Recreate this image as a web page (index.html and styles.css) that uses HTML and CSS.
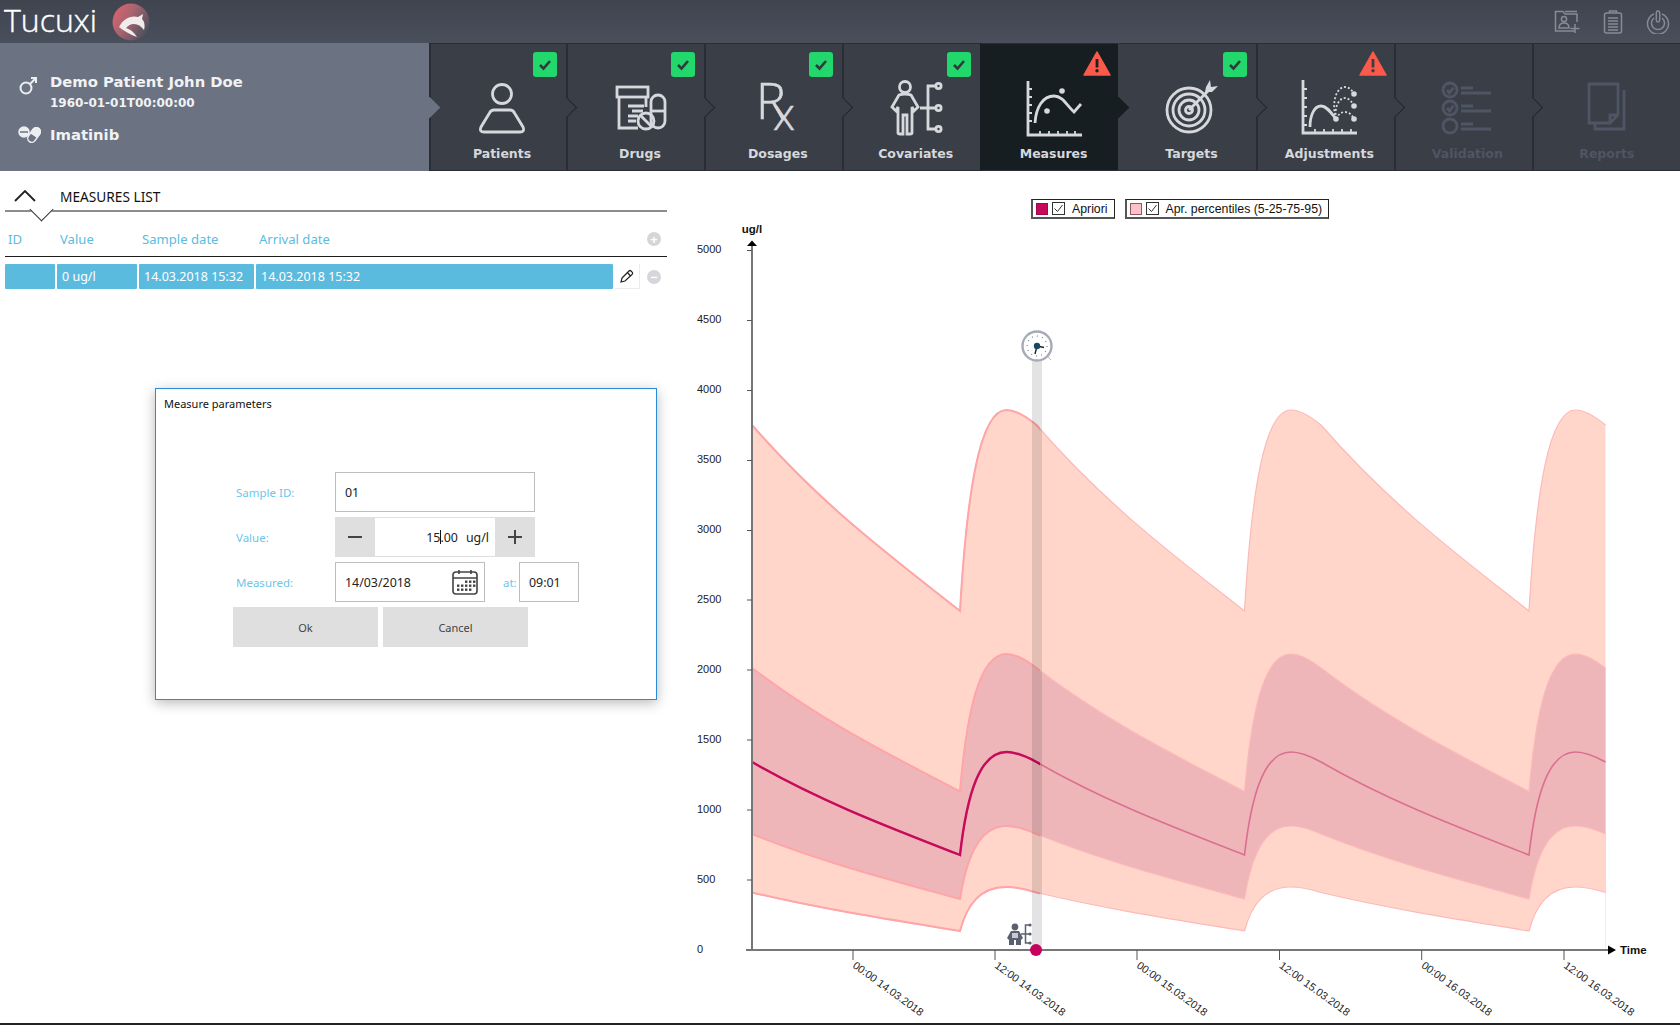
FILE: index.html
```html
<!DOCTYPE html>
<html lang="en">
<head>
  <meta charset="UTF-8">
  <title>Tucuxi</title>
  <link rel="stylesheet" href="styles.css">
</head>
<body>

  <header class="topbar">
    <div class="brand">
      <span class="brand-name">Tucuxi</span>
      <svg class="brand-logo" width="38" height="38" viewBox="0 0 38 38">
        <defs>
          <linearGradient id="logoFill" x1="0" y1="0" x2="1" y2="0.6">
            <stop offset="0" stop-color="#e8626e"/>
            <stop offset="0.5" stop-color="#a8646f"/>
            <stop offset="1" stop-color="#50525e"/>
          </linearGradient>
        </defs>
        <circle cx="19" cy="19" r="18.5" fill="url(#logoFill)"/>
        <path d="M7,24 C11,16 19,12 26,14 L31,11 L30,16 C33,19 33,24 32,27 C29,23 26,21 22,21 C18,21 16,23 14,25 C18,26 22,29 25,34 C19,32 12,28 7,24 Z" fill="#f1ecec"/>
      </svg>
    </div>
    <div class="top-actions">
      <svg width="26" height="24" viewBox="0 0 26 24">
        <path d="M21,21 H1.5 V1.5 H9 L11,4 H23 V12 M11,1.5 H23"/>
        <circle cx="10" cy="9" r="2.6"/>
        <path d="M5,18 Q5,13 10,13 Q15,13 15,18 Z"/>
        <path d="M21,14 V23 M16.5,18.5 H25.5"/>
      </svg>
      <svg width="20" height="24" viewBox="0 0 20 24">
        <rect x="1.5" y="3" width="17" height="20" rx="2"/>
        <path d="M6.5,3 V1 H13.5 V3 M5,8 H15 M5,11 H15 M5,14 H15 M5,17 H15 M5,20 H15"/>
      </svg>
      <svg width="24" height="24" viewBox="0 0 24 24">
        <path d="M8,4 A10.5,10.5 0 1 0 16,4 M8,8 A6.5,6.5 0 1 0 16,8"/>
        <rect x="10.3" y="1" width="3.4" height="11" rx="1.7"/>
      </svg>
    </div>
  </header>

  <nav class="flow">
    <section class="patient">
      <div class="patient-line">
        <svg class="patient-icon" width="20" height="20" viewBox="0 0 20 20">
          <circle cx="8" cy="12" r="5.5"/>
          <path d="M12,8 L18,2 M13,2 H18 V7"/>
        </svg>
        <div>
          <div class="patient-name">Demo Patient John Doe</div>
          <div class="patient-birth">1960-01-01T00:00:00</div>
        </div>
      </div>
      <div class="patient-line patient-drug">
        <svg class="patient-icon patient-icon--pills" width="24" height="18" viewBox="0 0 24 18">
          <circle cx="6" cy="6" r="5" fill="#eceef0"/>
          <path d="M2,6 H10" stroke="#6b7383"/>
          <g transform="rotate(35 16 9)">
            <rect x="12" y="1" width="8" height="16" rx="4"/>
            <path d="M16,1 a4,4 0 0 1 4,4 v4 h-8 v-4 a4,4 0 0 1 4,-4 z" fill="#eceef0"/>
          </g>
        </svg>
        <div class="patient-name">Imatinib</div>
      </div>
    </section>

    <div class="tab tab--first">
      <span class="badge"><svg width="24" height="25" viewBox="0 0 24 25"><rect width="24" height="25" rx="3" fill="#22d76c"/><path d="M7,13 L10.5,16.5 L17,9" fill="none" stroke="#2f3a3c" stroke-width="2.6"/></svg></span>
      <svg class="tab-icon" viewBox="0 0 60 60">
        <circle cx="30" cy="17" r="9.5"/>
        <path d="M22,33 H38 Q41,33 42.5,36 L51,50 Q53,55 48,55 H12 Q7,55 9,50 L17.5,36 Q19,33 22,33 Z"/>
      </svg>
      <span class="tab-label">Patients</span>
    </div>

    <div class="tab">
      <span class="badge"><svg width="24" height="25" viewBox="0 0 24 25"><rect width="24" height="25" rx="3" fill="#22d76c"/><path d="M7,13 L10.5,16.5 L17,9" fill="none" stroke="#2f3a3c" stroke-width="2.6"/></svg></span>
      <svg class="tab-icon" viewBox="0 0 60 60">
        <rect x="7" y="10" width="31" height="10"/>
        <path d="M9,20 V51 H28 M36,20 V30 M18,29 H34 M22,34 H33 M18,39 H28 M18,44 H26"/>
        <rect x="41" y="18" width="14" height="33" rx="7"/>
        <path d="M41,34 H55"/>
        <circle cx="36" cy="44" r="8"/>
        <path d="M30.5,38.5 L41.5,49.5"/>
      </svg>
      <span class="tab-label">Drugs</span>
    </div>

    <div class="tab">
      <span class="badge"><svg width="24" height="25" viewBox="0 0 24 25"><rect width="24" height="25" rx="3" fill="#22d76c"/><path d="M7,13 L10.5,16.5 L17,9" fill="none" stroke="#2f3a3c" stroke-width="2.6"/></svg></span>
      <svg class="tab-icon tab-icon--rx" viewBox="0 0 60 60">
        <text x="8" y="42" class="rx-big">R</text>
        <text x="25" y="53" class="rx-small">x</text>
      </svg>
      <span class="tab-label">Dosages</span>
    </div>

    <div class="tab">
      <span class="badge"><svg width="24" height="25" viewBox="0 0 24 25"><rect width="24" height="25" rx="3" fill="#22d76c"/><path d="M7,13 L10.5,16.5 L17,9" fill="none" stroke="#2f3a3c" stroke-width="2.6"/></svg></span>
      <svg class="tab-icon" viewBox="0 0 60 60">
        <circle cx="19" cy="10" r="5.5"/>
        <path d="M13,18 Q19,16 25,18 L32,30 L28,34 L26,30 V56 Q26,57 24,57 H21 V38 H17 V57 H14 Q12,57 12,56 V30 L10,34 L6,30 Z"/>
        <path d="M50,9 H42 V52 H50 M34,31 H49"/>
        <circle cx="52.5" cy="9" r="2.6"/>
        <circle cx="52.5" cy="31" r="2.6"/>
        <circle cx="52.5" cy="52" r="2.6"/>
      </svg>
      <span class="tab-label">Covariates</span>
    </div>

    <div class="tab tab--active">
      <span class="badge badge--warn"><svg width="28" height="25" viewBox="0 0 28 25"><path d="M14,1 L27,24 H1 Z" fill="#fb5a4a" stroke="#fb5a4a" stroke-linejoin="round" stroke-width="1.5"/><rect x="12.6" y="8" width="2.8" height="8.5" fill="#1a2024"/><circle cx="14" cy="19.7" r="1.7" fill="#1a2024"/></svg></span>
      <svg class="tab-icon" viewBox="0 0 60 60">
        <path d="M4,4 V58 H58"/>
        <path class="thin" d="M4,12 H8 M4,20 H8 M4,28 H8 M4,36 H8 M4,44 H8 M16,58 V54 M25,58 V54 M34,58 V54 M43,58 V54 M51,58 V54"/>
        <path d="M11,46 C12,30 19,19 30,19 C39,19 43,29 50,35 L57,27"/>
        <circle class="dot" cx="38" cy="14" r="2.8"/>
        <circle class="dot" cx="23" cy="34" r="2.8"/>
      </svg>
      <span class="tab-label">Measures</span>
    </div>

    <div class="tab tab--after-active">
      <span class="badge"><svg width="24" height="25" viewBox="0 0 24 25"><rect width="24" height="25" rx="3" fill="#22d76c"/><path d="M7,13 L10.5,16.5 L17,9" fill="none" stroke="#2f3a3c" stroke-width="2.6"/></svg></span>
      <svg class="tab-icon" viewBox="0 0 60 60">
        <circle cx="28" cy="33" r="22"/>
        <circle cx="28" cy="33" r="16"/>
        <circle cx="28" cy="33" r="10"/>
        <circle cx="28" cy="33" r="3.5"/>
        <path d="M28,33 L49,12"/>
        <path d="M45,10 L49,3 L50,10 L57,9 L51,15 L44,15 Z" class="dot"/>
      </svg>
      <span class="tab-label">Targets</span>
    </div>

    <div class="tab">
      <span class="badge badge--warn"><svg width="28" height="25" viewBox="0 0 28 25"><path d="M14,1 L27,24 H1 Z" fill="#fb5a4a" stroke="#fb5a4a" stroke-linejoin="round" stroke-width="1.5"/><rect x="12.6" y="8" width="2.8" height="8.5" fill="#3a3e47"/><circle cx="14" cy="19.7" r="1.7" fill="#3a3e47"/></svg></span>
      <svg class="tab-icon" viewBox="0 0 60 60">
        <path d="M4,3 V56 H58"/>
        <path class="thin" d="M4,12 H8 M4,21 H8 M4,30 H8 M4,39 H8 M4,48 H8 M16,56 V52 M25,56 V52 M34,56 V52 M43,56 V52 M52,56 V52"/>
        <path d="M11,50 C11,37 16,29 22,29 C28,29 32,36 37,42"/>
        <path class="dashed" d="M37,42 C32,24 38,10 46,10 C50,10 53,13 55,17 M37,42 C35,30 40,21 46,21 C50,21 53,25 55,29 M37,42 C39,38 42,35 46,35 C50,35 53,38 55,42"/>
        <circle class="dot" cx="37" cy="42" r="2.8"/>
        <circle class="dot" cx="55" cy="17" r="2.8"/>
        <circle class="dot" cx="55" cy="29" r="2.8"/>
        <circle class="dot" cx="55" cy="42" r="2.8"/>
      </svg>
      <span class="tab-label">Adjustments</span>
    </div>

    <div class="tab tab--disabled">
      <svg class="tab-icon" viewBox="0 0 60 60">
        <circle cx="13" cy="13" r="7"/>
        <circle cx="13" cy="31" r="7"/>
        <circle cx="13" cy="49" r="7"/>
        <path d="M10,13 L12.5,16 L16.5,10.5 M10,31 L12.5,34 L16.5,28.5"/>
        <path d="M24,11 H36 M24,16 H54 M24,29 H36 M24,34 H54 M24,47 H36 M24,52 H54"/>
      </svg>
      <span class="tab-label">Validation</span>
    </div>

    <div class="tab tab--disabled tab--last">
      <svg class="tab-icon" viewBox="0 0 60 60">
        <path d="M12,7 H41 V38 L33,46 H12 Z M33,46 V38 H41"/>
        <path d="M47,13 V52 H18 V46"/>
      </svg>
      <span class="tab-label">Reports</span>
    </div>
  </nav>

  <main class="content">
    <section class="measures">
      <div class="list-title">
        <svg class="collapse" width="22" height="12" viewBox="0 0 22 12"><path d="M1,11 L11,1 L21,11"/></svg>
        <span>MEASURES LIST</span>
        <span class="title-notch"></span>
      </div>

      <div class="list-grid list-head">
        <span>ID</span>
        <span>Value</span>
        <span>Sample date</span>
        <span>Arrival date</span>
        <span></span>
        <span class="round-btn">+</span>
      </div>

      <div class="list-grid list-row">
        <span class="cell"></span>
        <span class="cell">0 ug/l</span>
        <span class="cell">14.03.2018 15:32</span>
        <span class="cell">14.03.2018 15:32</span>
        <span class="edit-btn">
          <svg width="14" height="14" viewBox="0 0 14 14"><path d="M2,9 L9,2 Q10,1 11,2 L12.5,3.5 Q13,4.5 12,5.5 L5,12 L1,13 Z M7.5,3.5 L10.5,7"/></svg>
        </span>
        <span class="round-btn">&minus;</span>
      </div>

      <div class="dialog">
        <div class="dialog-title">Measure parameters</div>
        <div class="dialog-form">
          <label>Sample ID:</label>
          <div class="field field--wide">01</div>

          <label>Value:</label>
          <div class="stepper">
            <span class="step"><svg width="14" height="14" viewBox="0 0 14 14"><path d="M0,7 H14"/></svg></span>
            <span class="step-value">15<i class="caret"></i>.00<span class="unit">ug/l</span></span>
            <span class="step"><svg width="14" height="14" viewBox="0 0 14 14"><path d="M0,7 H14 M7,0 V14"/></svg></span>
          </div>

          <label>Measured:</label>
          <div class="when">
            <div class="field field--date">
              14/03/2018
              <svg width="26" height="26" viewBox="0 0 26 26">
                <rect x="1" y="3" width="24" height="22" rx="3"/>
                <path d="M1,9 H25 M7,1 V5 M19,1 V5"/>
                <g class="cal-dots">
                  <rect x="13" y="11.5" width="2.4" height="2.4"/><rect x="17" y="11.5" width="2.4" height="2.4"/><rect x="21" y="11.5" width="2.4" height="2.4"/>
                  <rect x="5" y="15.5" width="2.4" height="2.4"/><rect x="9" y="15.5" width="2.4" height="2.4"/><rect x="13" y="15.5" width="2.4" height="2.4"/><rect x="17" y="15.5" width="2.4" height="2.4"/><rect x="21" y="15.5" width="2.4" height="2.4"/>
                  <rect x="5" y="19.5" width="2.4" height="2.4"/><rect x="9" y="19.5" width="2.4" height="2.4"/><rect x="13" y="19.5" width="2.4" height="2.4"/><rect x="17" y="19.5" width="2.4" height="2.4"/>
                </g>
              </svg>
            </div>
            <label class="at">at:</label>
            <div class="field field--time">09:01</div>
          </div>

          <div class="dialog-buttons">
            <button class="btn">Ok</button>
            <button class="btn">Cancel</button>
          </div>
        </div>
      </div>
    </section>

    <section class="chart-panel">
      <div class="legend">
        <div class="legend-item">
          <span class="swatch swatch--apriori"></span>
          <svg class="legend-check" width="13" height="13" viewBox="0 0 13 13"><rect x="0.5" y="0.5" width="12" height="12"/><path d="M2.5,6.5 L5.5,9.5 L10.5,3"/></svg>
          <span>Apriori</span>
        </div>
        <div class="legend-item">
          <span class="swatch swatch--pct"></span>
          <svg class="legend-check" width="13" height="13" viewBox="0 0 13 13"><rect x="0.5" y="0.5" width="12" height="12"/><path d="M2.5,6.5 L5.5,9.5 L10.5,3"/></svg>
          <span>Apr. percentiles (5-25-75-95)</span>
        </div>
      </div>

      <svg class="chart" width="1000" height="804" viewBox="680 219 1000 804">
        <defs>
          <path id="p95" d="M752,425 c71,81.8 142,133.9 208,186 c7,-120.6 20,-201 46.5,-201 c10,0 20,6.75 30,15 c71,81.8 142,133.9 208,186 c7,-120.6 20,-201 46.5,-201 c10,0 20,6.75 30,15 c71,81.8 142,133.9 208,186 c7,-120.6 20,-201 46.5,-201 c10,0 20,6.75 30,15"/>
          <path id="p75" d="M752,668 c71,54.3 142,88.9 208,123.5 c7,-82.5 20,-137.5 46.5,-137.5 c10,0 20,6.3 30,14 c71,54.3 142,88.9 208,123.5 c7,-82.5 20,-137.5 46.5,-137.5 c10,0 20,6.3 30,14 c71,54.3 142,88.9 208,123.5 c7,-82.5 20,-137.5 46.5,-137.5 c10,0 20,6.3 30,14"/>
          <path id="p50" d="M752,762 c71,40.9 142,67 208,93 c7,-61.8 20,-103 46.5,-103 c10,0 20,4.5 30,10 c71,40.9 142,67 208,93 c7,-61.8 20,-103 46.5,-103 c10,0 20,4.5 30,10 c71,40.9 142,67 208,93 c7,-61.8 20,-103 46.5,-103 c10,0 20,4.5 30,10"/>
          <path id="p25" d="M752,834 c71,28.6 142,46.8 208,65 c7,-43.8 20,-73 46.5,-73 c10,0 20,3.6 30,8 c71,28.6 142,46.8 208,65 c7,-43.8 20,-73 46.5,-73 c10,0 20,3.6 30,8 c71,28.6 142,46.8 208,65 c7,-43.8 20,-73 46.5,-73 c10,0 20,3.6 30,8"/>
          <path id="p5" d="M752,892.5 c71,16.9 142,27.7 208,38.5 c7,-26.4 20,-44 46.5,-44 c10,0 20,2.5 30,5.5 c71,16.9 142,27.7 208,38.5 c7,-26.4 20,-44 46.5,-44 c10,0 20,2.5 30,5.5 c71,16.9 142,27.7 208,38.5 c7,-26.4 20,-44 46.5,-44 c10,0 20,2.5 30,5.5"/>
          <clipPath id="past"><rect x="680" y="225" width="360" height="798"/></clipPath>
        </defs>

        <!-- bands painted top to bottom, each one closed down to the x axis -->
        <path class="band band--outer" d="M752,425 c71,81.8 142,133.9 208,186 c7,-120.6 20,-201 46.5,-201 c10,0 20,6.75 30,15 c71,81.8 142,133.9 208,186 c7,-120.6 20,-201 46.5,-201 c10,0 20,6.75 30,15 c71,81.8 142,133.9 208,186 c7,-120.6 20,-201 46.5,-201 c10,0 20,6.75 30,15 V950 H752 Z"/>
        <path class="band band--inner" d="M752,668 c71,54.3 142,88.9 208,123.5 c7,-82.5 20,-137.5 46.5,-137.5 c10,0 20,6.3 30,14 c71,54.3 142,88.9 208,123.5 c7,-82.5 20,-137.5 46.5,-137.5 c10,0 20,6.3 30,14 c71,54.3 142,88.9 208,123.5 c7,-82.5 20,-137.5 46.5,-137.5 c10,0 20,6.3 30,14 V950 H752 Z"/>
        <path class="band band--outer" d="M752,834 c71,28.6 142,46.8 208,65 c7,-43.8 20,-73 46.5,-73 c10,0 20,3.6 30,8 c71,28.6 142,46.8 208,65 c7,-43.8 20,-73 46.5,-73 c10,0 20,3.6 30,8 c71,28.6 142,46.8 208,65 c7,-43.8 20,-73 46.5,-73 c10,0 20,3.6 30,8 V950 H752 Z"/>
        <path class="band band--clear" d="M752,892.5 c71,16.9 142,27.7 208,38.5 c7,-26.4 20,-44 46.5,-44 c10,0 20,2.5 30,5.5 c71,16.9 142,27.7 208,38.5 c7,-26.4 20,-44 46.5,-44 c10,0 20,2.5 30,5.5 c71,16.9 142,27.7 208,38.5 c7,-26.4 20,-44 46.5,-44 c10,0 20,2.5 30,5.5 V950 H752 Z"/>

        <use href="#p95" class="pct-line"/>
        <use href="#p75" class="pct-line"/>
        <use href="#p25" class="pct-line"/>
        <use href="#p5" class="pct-line"/>
        <use href="#p95" class="pct-line pct-line--past" clip-path="url(#past)"/>
        <use href="#p75" class="pct-line pct-line--past" clip-path="url(#past)"/>
        <use href="#p25" class="pct-line pct-line--past" clip-path="url(#past)"/>
        <use href="#p5" class="pct-line pct-line--past" clip-path="url(#past)"/>
        <use href="#p50" class="median"/>
        <use href="#p50" class="median median--past" clip-path="url(#past)"/>

        <rect class="now-band" x="1032" y="358" width="10" height="592"/>

        <!-- axes -->
        <path class="axis" d="M752,246 V950 M746,950 H1610"/>
        <path class="tick" d="M747,250.5 H752 M747,320.5 H752 M747,390.5 H752 M747,460.5 H752 M747,530.5 H752 M747,600 H752 M747,670 H752 M747,740 H752 M747,810 H752 M747,880 H752"/>
        <path class="tick" d="M853,950 V960 M995,950 V960 M1137,950 V960 M1279.5,950 V960 M1421.7,950 V960 M1564,950 V960"/>
        <path class="arrow" d="M752,240.5 L757,246 H747 Z M1616,950 L1608,954.5 V945.5 Z"/>

        <g class="y-labels">
          <text x="697" y="253">5000</text>
          <text x="697" y="323">4500</text>
          <text x="697" y="393">4000</text>
          <text x="697" y="463">3500</text>
          <text x="697" y="533">3000</text>
          <text x="697" y="603">2500</text>
          <text x="697" y="673">2000</text>
          <text x="697" y="743">1500</text>
          <text x="697" y="813">1000</text>
          <text x="697" y="883">500</text>
          <text x="697" y="953">0</text>
        </g>
        <text class="axis-name" x="752" y="233" text-anchor="middle">ug/l</text>
        <text class="axis-name" x="1620" y="954">Time</text>

        <g class="x-labels">
          <text transform="translate(852,967) rotate(36)">00:00 14.03.2018</text>
          <text transform="translate(994,967) rotate(36)">12:00 14.03.2018</text>
          <text transform="translate(1136,967) rotate(36)">00:00 15.03.2018</text>
          <text transform="translate(1278.5,967) rotate(36)">12:00 15.03.2018</text>
          <text transform="translate(1420.7,967) rotate(36)">00:00 16.03.2018</text>
          <text transform="translate(1563,967) rotate(36)">12:00 16.03.2018</text>
        </g>

        <!-- clock marker over the band -->
        <g class="clock">
          <path class="clock-needle" d="M1027,335 L1051,360"/>
          <circle class="clock-face" cx="1037" cy="346" r="14.5"/>
          <circle class="clock-ticks" cx="1037" cy="346" r="10"/>
          <path class="clock-hand" d="M1037,346 L1044,347.5 M1037,346 L1035,354"/>
          <circle class="clock-hub" cx="1037" cy="346" r="3.2"/>
        </g>

        <!-- covariate change flag -->
        <g class="cov-flag">
          <circle cx="1015" cy="927" r="3.4"/>
          <path d="M1011,931 H1019 L1023,938 L1021,940 V945 H1016 V940 H1014 V945 H1009 V940 L1007,938 Z"/>
          <rect class="cov-shirt" x="1012" y="933" width="6" height="5"/>
          <path class="cov-tree" d="M1029,925 H1025.5 V943 H1029 M1021,934 H1029"/>
          <circle cx="1030" cy="925" r="1.6"/>
          <circle cx="1030" cy="934" r="1.6"/>
          <circle cx="1030" cy="943" r="1.6"/>
        </g>

        <circle class="now-dot" cx="1036" cy="950" r="6"/>
      </svg>
    </section>
  </main>

  <div class="bottom-line"></div>

</body>
</html>
```

FILE: styles.css
```css
* {
  box-sizing: border-box;
}

html, body {
  margin: 0;
  padding: 0;
}

body {
  width: 1680px;
  height: 1025px;
  overflow: hidden;
  background-color: #ffffff;
  font-family: "Noto Sans", sans-serif;
  display: flex;
  flex-direction: column;
}

/* top bar */

.topbar {
  height: 43px;
  flex: none;
  display: flex;
  justify-content: space-between;
  align-items: center;
  background: linear-gradient(#3f444f, #494f5b);
}

.brand {
  display: flex;
  align-items: center;
  padding-left: 4px;
}

.brand-name {
  font-family: "Open Sans", sans-serif;
  font-weight: 300;
  font-size: 32px;
  line-height: 38px;
  color: #ffffff;
  margin-top: -3px;
  -webkit-text-stroke: 0.4px #ffffff;
}

.brand-logo {
  margin-left: 15px;
}

.top-actions {
  display: flex;
  align-items: center;
  gap: 23px;
  padding-right: 10px;
}

.top-actions svg {
  fill: none;
  stroke: #868b95;
  stroke-width: 1.5;
}

/* patient + workflow tabs */

.flow {
  height: 128px;
  flex: none;
  display: flex;
}

.patient {
  width: 428.6px;
  flex: none;
  background-color: #6b7383;
  padding: 28px 0 0 18px;
  color: #f1f2f4;
  font-family: "DejaVu Sans", sans-serif;
  font-weight: bold;
}

.patient-line {
  display: flex;
  align-items: flex-start;
  gap: 12px;
}

.patient-drug {
  margin-top: 13px;
  align-items: center;
  gap: 8px;
}

.patient-icon {
  flex: none;
  margin-top: 5px;
  fill: none;
  stroke: #eceef0;
  stroke-width: 2;
}

.patient-icon--pills {
  margin-top: 0;
  margin-left: 0;
  stroke-width: 1.5;
}

.patient-name {
  font-size: 14.8px;
  line-height: 22px;
}

.patient-birth {
  font-size: 12px;
  line-height: 16px;
  margin-top: 2px;
}

.tab {
  position: relative;
  flex: 0 0 137.9px;
  padding: 34px 0 0 7px;
  display: flex;
  flex-direction: column;
  align-items: center;
  background-color: #3a3e47;
  border-left: 2px solid #2a2d34;
  border-top: 1px solid #2a2d34;
  border-bottom: 1px solid #2a2d34;
  color: #d6d8dc;
}

.tab::before {
  content: "";
  position: absolute;
  left: -9px;
  top: 56px;
  width: 14px;
  height: 14px;
  transform: rotate(45deg);
  background-color: #3a3e47;
  border-top: 1px solid #23262d;
  border-right: 1px solid #23262d;
}

.tab--first::before {
  background-color: #6b7383;
  border-color: #6b7383;
}

.tab--active {
  background-color: #171e21;
  border-left-color: #171e21;
}

.tab--active::before {
  display: none;
}

.tab--after-active {
  border-left-color: #3a3e47;
}

.tab--after-active::before {
  background-color: #171e21;
  border-color: #171e21;
}

.tab--disabled {
  color: #4e5564;
}

.tab--last {
  flex: 1;
  padding-left: 0;
}

.tab-icon {
  width: 60px;
  height: 60px;
  margin-top: -1px;
  overflow: visible;
  fill: none;
  stroke: currentColor;
  stroke-width: 2.8;
}

.tab-icon .dot {
  fill: currentColor;
  stroke: none;
}

.tab-icon .thin {
  stroke-width: 1.8;
}

.tab-icon .dashed {
  stroke-width: 1.8;
  stroke-dasharray: 2 2;
}

.tab-icon--rx {
  fill: currentColor;
  stroke: currentColor;
  stroke-width: 0.6;
  font-family: "Open Sans", sans-serif;
  font-weight: 300;
}

.rx-big {
  font-size: 50px;
}

.rx-small {
  font-size: 44px;
}

.tab-label {
  font-family: "DejaVu Sans", sans-serif;
  font-weight: bold;
  font-size: 12.5px;
  line-height: 18px;
  margin-top: 8px;
}

.badge {
  position: absolute;
  top: 8px;
  right: 9px;
  height: 25px;
  line-height: 0;
}

.badge--warn {
  top: 7px;
  right: 7px;
}

/* main content */

.content {
  flex: 1;
  display: flex;
}

.measures {
  position: relative;
  width: 680px;
  flex: none;
  padding: 0 13px 0 5px;
}

.list-title {
  position: relative;
  height: 41px;
  display: flex;
  align-items: center;
  padding: 11px 0 0 55px;
  border-bottom: 2px solid #8c8c8c;
  font-size: 13.7px;
  color: #111111;
}

.collapse {
  position: absolute;
  left: 9px;
  top: 19px;
  fill: none;
  stroke: #222222;
  stroke-width: 1.8;
}

.title-notch {
  position: absolute;
  left: 28px;
  bottom: -8px;
  width: 17px;
  height: 17px;
  transform: rotate(45deg);
  background-color: #ffffff;
  border-right: 1px solid #333333;
  border-bottom: 1px solid #333333;
}

.list-grid {
  display: grid;
  grid-template-columns: 50px 80px 115px 357px 27px 1fr;
  column-gap: 2px;
  align-items: center;
}

.list-head {
  height: 45px;
  padding-top: 9px;
  border-bottom: 1px solid #1c1c1c;
  color: #5bbce0;
  font-size: 13.1px;
}

.list-head span {
  padding-left: 3px;
}

.list-row {
  margin-top: 7px;
  height: 25px;
  font-size: 12.5px;
  color: #ffffff;
}

.cell {
  height: 25px;
  line-height: 25px;
  padding-left: 5px;
  background-color: #5bbbdf;
  border-radius: 1px;
}

.edit-btn {
  width: 25px;
  height: 25px;
  display: flex;
  align-items: center;
  justify-content: center;
  border-right: 1px solid #ececec;
  border-bottom: 1px solid #ececec;
}

.edit-btn svg {
  fill: none;
  stroke: #222222;
  stroke-width: 1.2;
}

.round-btn {
  width: 14px;
  height: 14px;
  justify-self: center;
  margin-left: -3px;
  padding: 0 !important;
  border-radius: 50%;
  background-color: #d5d6da;
  color: #ffffff;
  font-size: 13px;
  font-weight: bold;
  line-height: 14px;
  text-align: center;
}

/* dialog over the list */

.dialog {
  position: absolute;
  left: 155px;
  top: 217px;
  width: 502px;
  height: 312px;
  background-color: #ffffff;
  border: 1px solid #2a8cd8;
  box-shadow: 0 3px 12px rgba(0, 0, 0, 0.28);
}

.dialog-title {
  padding: 6px 0 0 8px;
  font-size: 11px;
  line-height: 18px;
  color: #111111;
}

.dialog-form {
  margin-top: 59px;
  padding-left: 80px;
  display: grid;
  grid-template-columns: 99px 1fr;
  grid-auto-rows: 40px;
  row-gap: 5px;
  align-items: center;
  font-size: 12.4px;
  color: #222222;
}

.dialog-form label {
  font-size: 11.5px;
  color: #6cc6ea;
}

.field {
  height: 40px;
  display: flex;
  align-items: center;
  padding-left: 9px;
  border: 1px solid #bdbdbd;
}

.field--wide {
  width: 200px;
}

.field--date {
  width: 150px;
  justify-content: space-between;
  padding-right: 6px;
}

.field--date svg {
  fill: none;
  stroke: #444444;
  stroke-width: 1.6;
}

.cal-dots {
  fill: #444444;
  stroke: none;
}

.field--time {
  width: 60px;
}

.stepper {
  width: 200px;
  height: 40px;
  display: flex;
  background-color: #dfdfdf;
  padding: 1px 0;
}

.step {
  width: 40px;
  flex: none;
  display: flex;
  align-items: center;
  justify-content: center;
}

.step svg {
  fill: none;
  stroke: #444444;
  stroke-width: 2;
}

.step-value {
  flex: 1;
  background-color: #ffffff;
  display: flex;
  align-items: center;
  justify-content: flex-end;
  padding-right: 6px;
}

.caret {
  width: 1px;
  height: 14px;
  margin-right: -1px;
  background-color: #111111;
}

.unit {
  margin-left: 8px;
}

.when {
  display: flex;
  align-items: center;
}

.at {
  width: 34px;
  padding-left: 18px;
  white-space: nowrap;
}

.dialog-buttons {
  grid-column: 1 / 3;
  margin-left: -3px;
  display: flex;
  gap: 5px;
}

.btn {
  width: 145px;
  height: 40px;
  border: none;
  background-color: #dfdfdf;
  color: #444444;
  font-family: "Noto Sans", sans-serif;
  font-size: 11px;
}

/* chart */

.chart-panel {
  flex: 1;
  display: flex;
  flex-direction: column;
}

.legend {
  display: flex;
  gap: 10px;
  height: 20px;
  margin: 28px 0 0 351px;
  font-family: "Liberation Sans", sans-serif;
  font-size: 12.3px;
  color: #111111;
}

.legend-item {
  display: flex;
  align-items: center;
  gap: 4px;
  padding: 0 6px 0 3px;
  border: 1px solid #222222;
  border-left: 2px solid #555555;
  border-bottom: 2px solid #555555;
}

.legend-item > span:last-child {
  margin-left: 3px;
}

.swatch {
  width: 12px;
  height: 12px;
  border: 1px solid #8a5a64;
}

.swatch--apriori {
  background-color: #c9085c;
  border-color: #a1084c;
}

.swatch--pct {
  background-color: #ffc0c8;
}

.legend-check {
  fill: none;
  stroke: #333333;
  stroke-width: 1;
}

.chart {
  display: block;
  font-family: "Liberation Sans", sans-serif;
}

.band {
  stroke: none;
}

.band--outer {
  fill: #ffd6c9;
}

.band--inner {
  fill: #eeb6b9;
}

.band--clear {
  fill: #ffffff;
}

.pct-line {
  fill: none;
  stroke: #fdb9b9;
  stroke-width: 1.2;
}

.pct-line--past {
  stroke: #ffa4a8;
  stroke-width: 2;
}

.median {
  fill: none;
  stroke: #dc6f8f;
  stroke-width: 1.6;
}

.median--past {
  stroke: #c80a5a;
  stroke-width: 2.4;
}

.now-band {
  fill: rgba(0, 0, 0, 0.11);
}

.axis {
  fill: none;
  stroke: #777777;
  stroke-width: 2;
}

.tick {
  fill: none;
  stroke: #555555;
  stroke-width: 1;
}

.arrow {
  fill: #000000;
}

.y-labels text {
  font-size: 11px;
  fill: #222222;
}

.x-labels text {
  font-size: 10.8px;
  fill: #222222;
}

.axis-name {
  font-size: 11.5px;
  font-weight: bold;
  fill: #111111;
}

.clock-needle {
  stroke: #a5aab5;
  stroke-width: 0.8;
}

.clock-face {
  fill: #ffffff;
  stroke: #a5aab5;
  stroke-width: 2.4;
}

.clock-ticks {
  fill: none;
  stroke: #6d8a98;
  stroke-width: 1.2;
  stroke-dasharray: 1 4.2;
}

.clock-hand {
  stroke: #222222;
  stroke-width: 1.4;
}

.clock-hub {
  fill: #174a60;
}

.cov-flag {
  fill: #5a6070;
}

.cov-shirt {
  fill: #c8cad0;
}

.cov-tree {
  fill: none;
  stroke: #5a6070;
  stroke-width: 1.5;
}

.now-dot {
  fill: #c8005f;
}

.bottom-line {
  height: 2px;
  flex: none;
  background-color: #222222;
}
```
